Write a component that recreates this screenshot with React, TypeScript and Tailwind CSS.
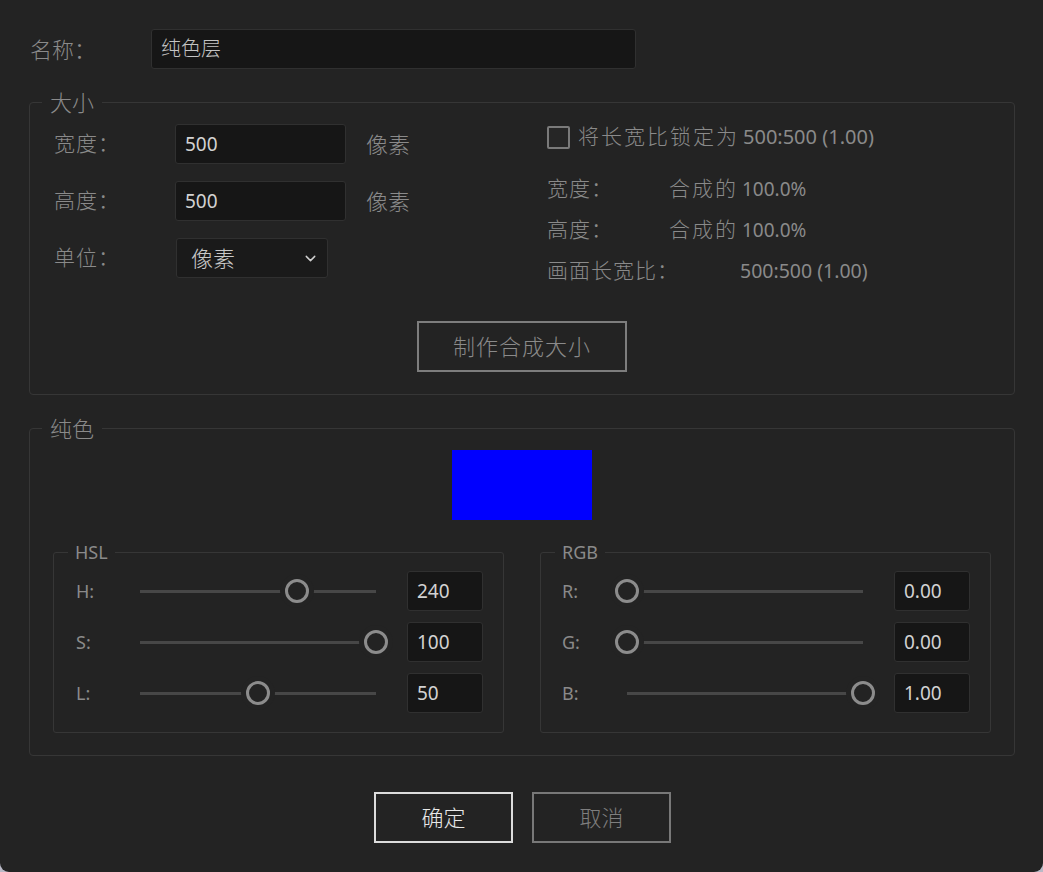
import React from "react";
import { ChevronDown } from "lucide-react";

const FONT = "font-['Noto_Sans','Noto_Sans_CJK_SC',sans-serif]";

function Legend({ children }: { children: React.ReactNode }) {
  return (
    <div className="absolute left-[12px] top-[-14px] bg-[#232323] px-[8px] leading-[26px] text-[22px] font-light text-[#8a8a8a]">
      {children}
    </div>
  );
}

function SmallLegend({ children }: { children: React.ReactNode }) {
  return (
    <div className="absolute left-[14px] top-[-13px] bg-[#232323] px-[7px] leading-[24px] text-[18px] text-[#8a8a8a]">
      {children}
    </div>
  );
}

function NumBox({ value, w = "w-[171px]" }: { value: string; w?: string }) {
  return (
    <div
      className={`${w} h-[40px] rounded-[3px] border border-[#303030] bg-[#161616] pl-[9px] flex items-center text-[19px] text-[#d2d2d2]`}
    >
      {value}
    </div>
  );
}

function Slider({ frac }: { frac: number }) {
  return (
    <div className="relative w-[236px] h-[26px]">
      <div className="absolute left-0 right-0 top-[12px] h-[3px] bg-[#474747]" />
      <div
        className="absolute top-[1px] w-[24px] h-[24px] -ml-[12px] rounded-full border-[3px] border-[#8c8c8c] bg-[#232323] shadow-[0_0_0_5px_#232323]"
        style={{ left: `${frac * 100}%` }}
      />
    </div>
  );
}

function ChannelRow({ label, frac, value, labelW }: { label: string; frac: number; value: string; labelW: string }) {
  return (
    <div className="flex items-center h-[40px]">
      <div className={`${labelW} text-[18px] text-[#8a8a8a]`}>{label}</div>
      <Slider frac={frac} />
      <div className="ml-[31px]">
        <NumBox value={value} w="w-[76px]" />
      </div>
    </div>
  );
}

export default function App() {
  return (
    <div className={`w-[1043px] h-[872px] bg-[#b9b9c6] ${FONT}`}>
      <div className="w-[1043px] h-[872px] bg-[#232323] rounded-b-[9px] pt-[29px] pl-[29px] pr-[28px] flex flex-col">
        {/* Name row */}
        <div className="flex items-center">
          <div className="w-[122px] pl-[1px] text-[22px] font-light text-[#8a8a8a]">名称：</div>
          <div className="w-[485px] h-[40px] rounded-[3px] border border-[#303030] bg-[#161616] pl-[9px] flex items-center text-[20px] font-light text-[#c4c4c4]">
            纯色层
          </div>
        </div>

        {/* 大小 group */}
        <div className="relative mt-[33px] h-[293px] rounded-[4px] border border-[#363636] flex flex-col">
          <Legend>大小</Legend>
          <div className="flex pt-[21px] pl-[24px]">
            <div className="w-[493px] flex flex-col gap-[17px]">
              <div className="flex items-center">
                <div className="w-[121px] text-[21px] font-light text-[#8a8a8a] tracking-[1px]">宽度：</div>
                <NumBox value="500" />
                <div className="ml-[20px] text-[22px] font-light text-[#8a8a8a]">像素</div>
              </div>
              <div className="flex items-center">
                <div className="w-[121px] text-[21px] font-light text-[#8a8a8a] tracking-[1px]">高度：</div>
                <NumBox value="500" />
                <div className="ml-[20px] text-[22px] font-light text-[#8a8a8a]">像素</div>
              </div>
              <div className="flex items-center">
                <div className="w-[122px] text-[21px] font-light text-[#8a8a8a] tracking-[1px]">单位：</div>
                <div className="w-[152px] h-[40px] rounded-[3px] border border-[#303030] bg-[#1a1a1a] pl-[14px] pr-[8px] flex items-center justify-between">
                  <span className="text-[22px] font-light text-[#c8c8c8]">像素</span>
                  <ChevronDown size={17} strokeWidth={2} color="#d0d0d0" />
                </div>
              </div>
            </div>
            <div className="flex flex-col pt-[1px]">
              <div className="flex items-center h-[24px]">
                <div className="w-[23px] h-[23px] rounded-[2px] border-[2px] border-[#7a7a7a] bg-[#262626]" />
                <span className="ml-[8px] text-[21px] font-light text-[#8a8a8a] tracking-[2px]">将长宽比锁定为</span>
                <span className="ml-[4px] text-[20px] text-[#8a8a8a]">500:500 (1.00)</span>
              </div>
              <div className="mt-[25px] flex flex-col gap-[11px]">
                <div className="flex items-center h-[30px]">
                  <div className="w-[122px] text-[21px] font-light text-[#8a8a8a] tracking-[1px]">宽度：</div>
                  <span className="text-[21px] font-light text-[#8a8a8a] tracking-[2px]">合成的</span>
                  <span className="ml-[4px] text-[19px] text-[#8a8a8a]">100.0%</span>
                </div>
                <div className="flex items-center h-[30px]">
                  <div className="w-[122px] text-[21px] font-light text-[#8a8a8a] tracking-[1px]">高度：</div>
                  <span className="text-[21px] font-light text-[#8a8a8a] tracking-[2px]">合成的</span>
                  <span className="ml-[4px] text-[19px] text-[#8a8a8a]">100.0%</span>
                </div>
                <div className="flex items-center h-[30px]">
                  <div className="w-[193px] text-[21px] font-light text-[#8a8a8a] tracking-[1px]">画面长宽比：</div>
                  <span className="text-[19.5px] text-[#8a8a8a]">500:500 (1.00)</span>
                </div>
              </div>
            </div>
          </div>
          <div className="mt-auto mb-[22px] flex justify-center">
            <div className="w-[210px] h-[51px] border-[2px] border-[#7d7d7d] flex items-center justify-center text-[22px] font-light text-[#8a8a8a] tracking-[1px]">
              制作合成大小
            </div>
          </div>
        </div>

        {/* 纯色 group */}
        <div className="relative mt-[33px] h-[328px] rounded-[4px] border border-[#363636] flex flex-col">
          <Legend>纯色</Legend>
          <div className="mt-[21px] flex justify-center">
            <div className="w-[140px] h-[70px] bg-[#0000ff]" />
          </div>
          <div className="mt-[32px] pl-[23px] flex gap-[36px]">
            <div className="relative w-[451px] h-[181px] rounded-[3px] border border-[#363636] pt-[18px] pl-[22px] flex flex-col gap-[11px]">
              <SmallLegend>HSL</SmallLegend>
              <ChannelRow label="H:" frac={240 / 360} value="240" labelW="w-[64px]" />
              <ChannelRow label="S:" frac={1} value="100" labelW="w-[64px]" />
              <ChannelRow label="L:" frac={0.5} value="50" labelW="w-[64px]" />
            </div>
            <div className="relative w-[451px] h-[181px] rounded-[3px] border border-[#363636] pt-[18px] pl-[21px] flex flex-col gap-[11px]">
              <SmallLegend>RGB</SmallLegend>
              <ChannelRow label="R:" frac={0} value="0.00" labelW="w-[65px]" />
              <ChannelRow label="G:" frac={0} value="0.00" labelW="w-[65px]" />
              <ChannelRow label="B:" frac={1} value="1.00" labelW="w-[65px]" />
            </div>
          </div>
        </div>

        {/* Buttons */}
        <div className="mt-[36px] flex justify-center gap-[19px] pl-[1px]">
          <div className="w-[139px] h-[51px] border-[2px] border-[#dcdcdc] flex items-center justify-center text-[22px] font-light text-[#e8e8e8]">
            确定
          </div>
          <div className="w-[139px] h-[51px] border-[2px] border-[#787878] flex items-center justify-center text-[22px] font-light text-[#7e7e7e]">
            取消
          </div>
        </div>
      </div>
    </div>
  );
}
